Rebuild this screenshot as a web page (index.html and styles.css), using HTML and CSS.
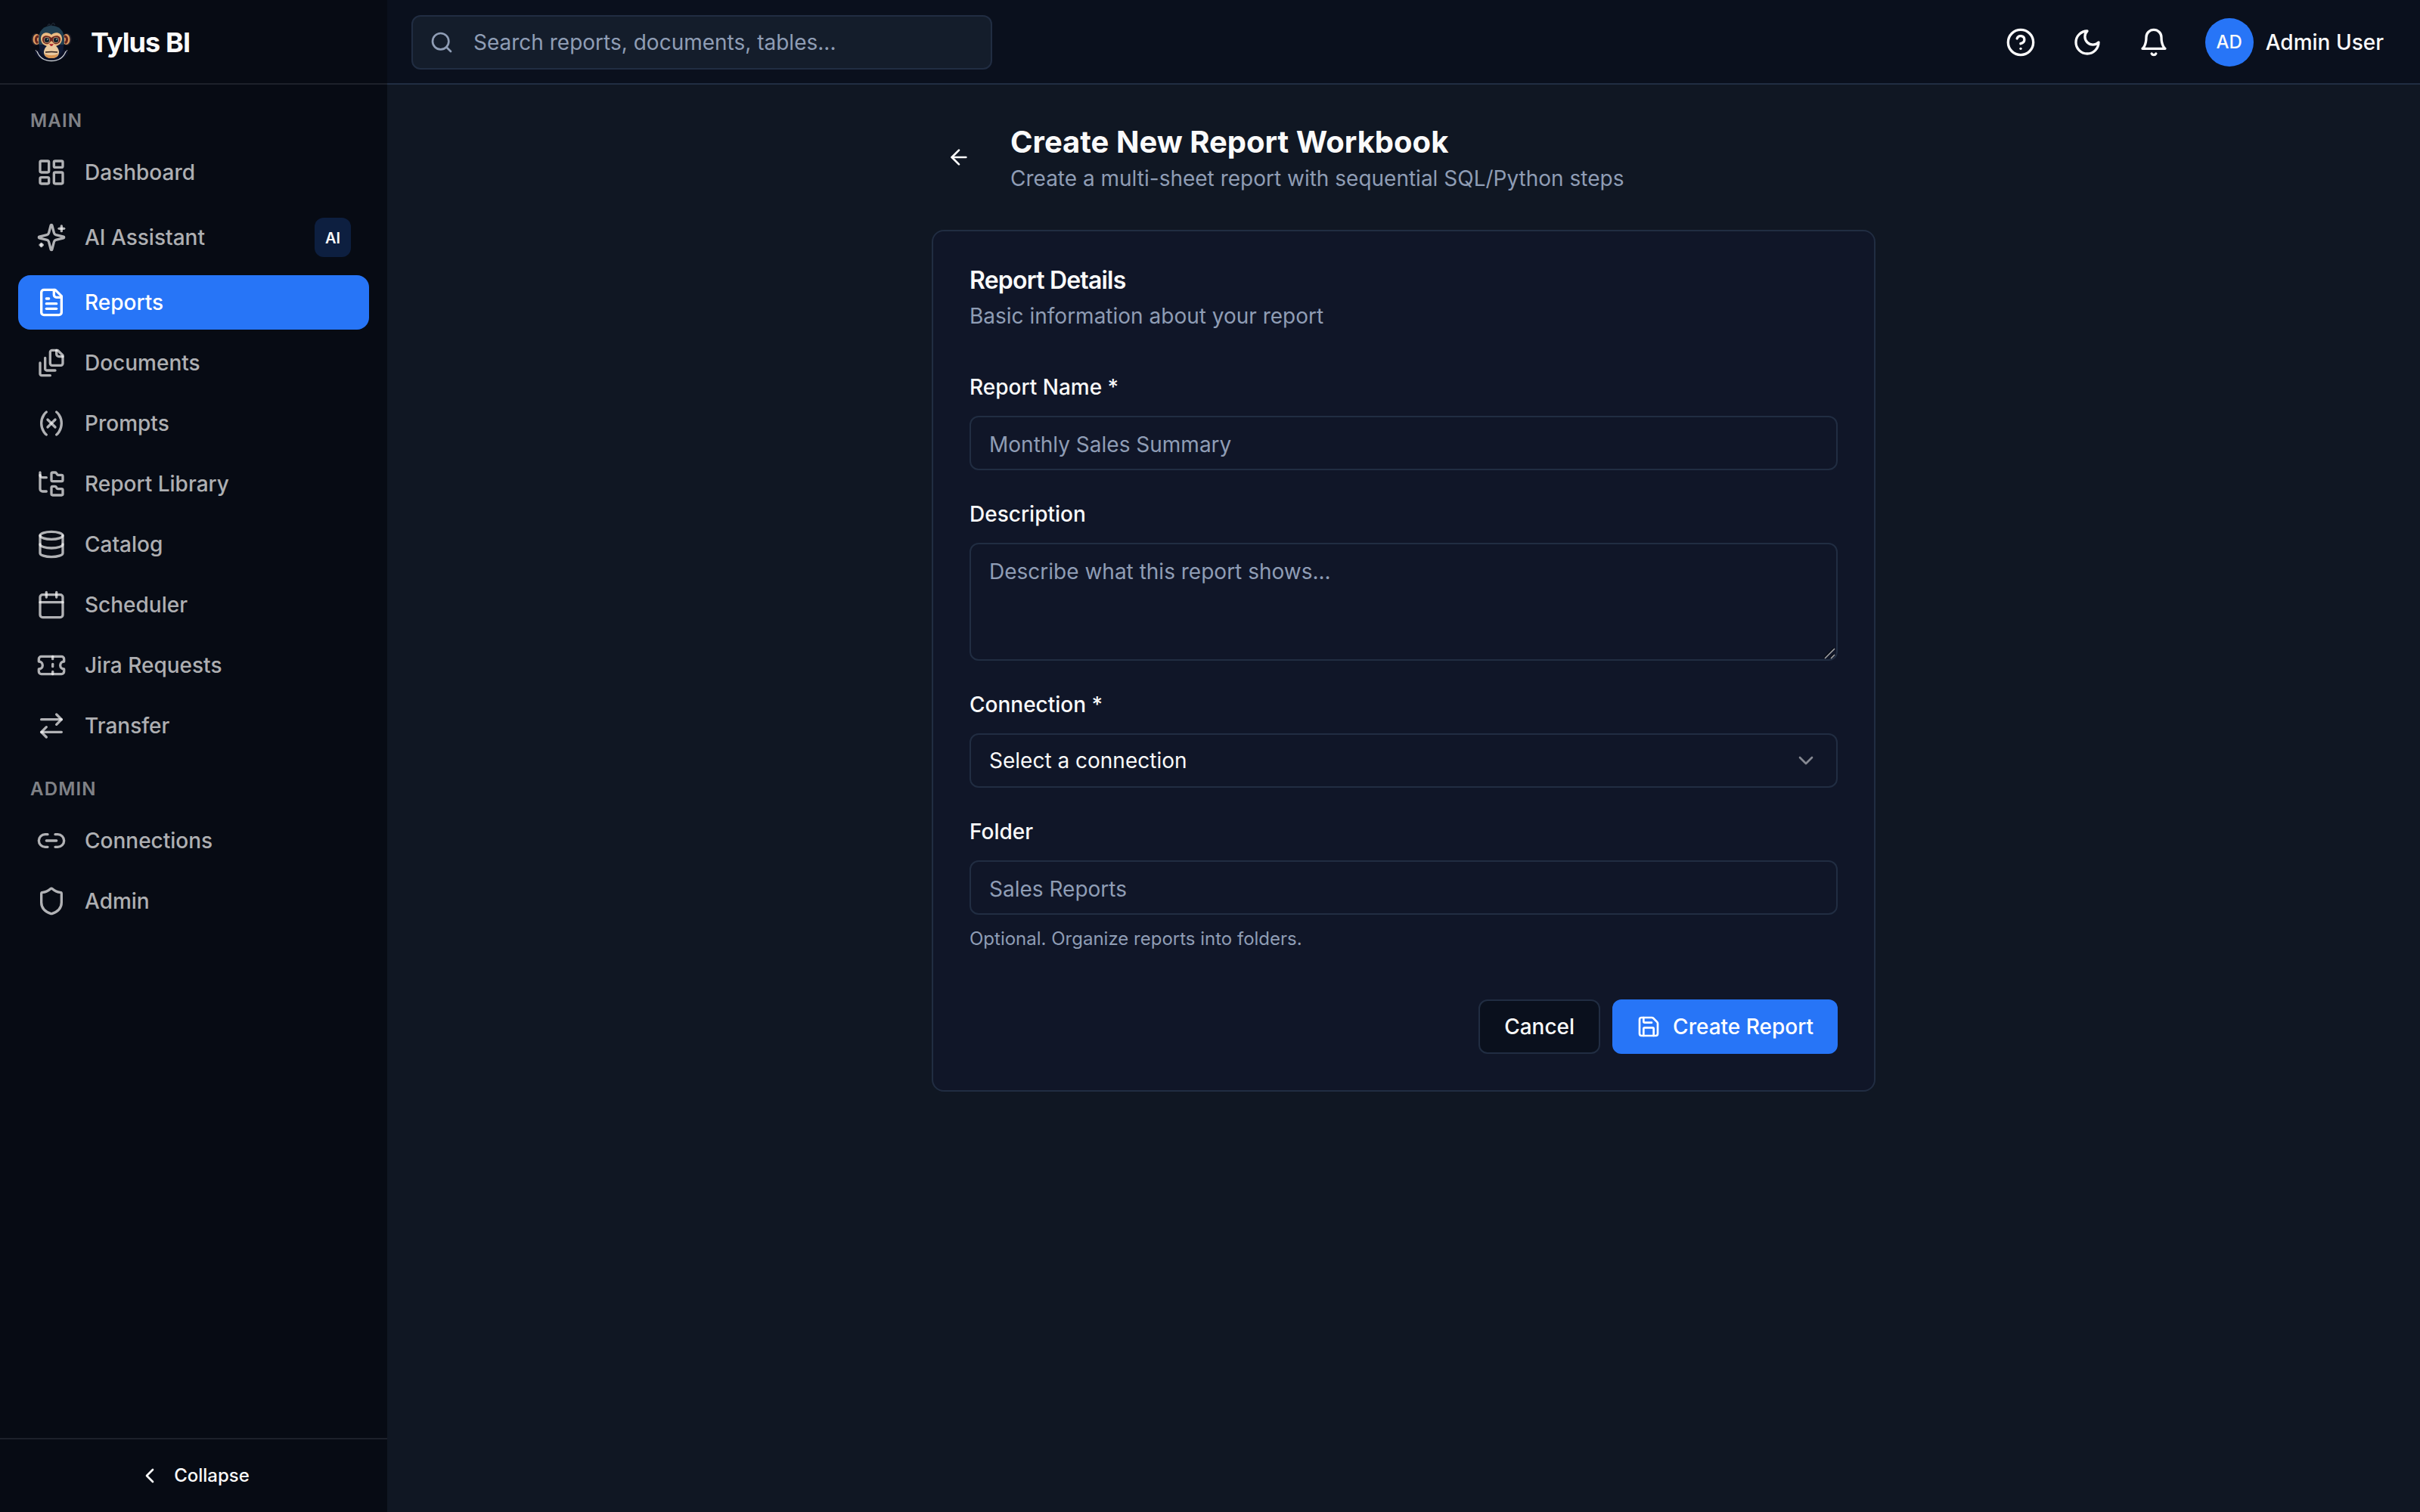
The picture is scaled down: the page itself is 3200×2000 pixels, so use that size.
FILE: index.html
```html
<!DOCTYPE html>
<html lang="en">
<head>
  <meta charset="UTF-8" />
  <meta name="viewport" content="width=device-width, initial-scale=1.0" />
  <title>Tylus BI - Create New Report Workbook</title>
  <link rel="stylesheet" href="styles.css">
</head>
<body>
  <aside class="sidebar">
    <div class="brand">
      <svg class="logo" viewBox="0 0 56 56">
        <path d="M8 38c-2 2-3 4-1 6 4 6 12 9 21 9s17-3 21-9c2-2 1-4-1-6z" fill="#0b1026"/>
        <path d="M9 40c3 8 10 12.500 19 12.500S44 48 47 40" fill="none" stroke="#c9cdd0" stroke-width="1.300"/>
        <path d="M7 38l2 3M49 38l-2 3" stroke="#aaa" stroke-width="1"/>
        <path d="M23 6c1-3 4-3 3 1M28 6c0-4 5-4 4-1" fill="none" stroke="#2b3846" stroke-width="1"/>
        <ellipse cx="7.500" cy="24" rx="6" ry="8" fill="#24222b"/>
        <ellipse cx="48.500" cy="24" rx="6" ry="8" fill="#24222b"/>
        <ellipse cx="8.500" cy="24" rx="5" ry="7" fill="#dc9a60"/>
        <ellipse cx="47.500" cy="24" rx="5" ry="7" fill="#dc9a60"/>
        <path d="M11 20c-4 0-5 6-1 9M45 20c4 0 5 6 1 9" fill="none" stroke="#64231d" stroke-width="3"/>
        <path d="M11 25C11 12 18 6 28 6s17 6 17 19c0 8-3 16-9 19H20c-6-3-9-11-9-19z" fill="#213e50"/>
        <path d="M12 31c-1 7 3 14 9 15h14c6-1 10-8 9-15z" fill="#101a35"/>
        <path d="M28 18c-5-5-14-3-14 5 0 6 4 9 8 10h12c4-1 8-4 8-10 0-8-9-10-14-5z" fill="#ebba82"/>
        <path d="M28 22c-4-4-12-4-12 2 0 5 4 7 8 6l4-4 4 4c4 1 8-1 8-6 0-6-8-6-12-2z" fill="#6c251e"/>
        <circle cx="22" cy="25" r="3.900" fill="#c9a07a"/>
        <circle cx="34" cy="25" r="3.900" fill="#c9a07a"/>
        <circle cx="22" cy="25" r="3.200" fill="#15232c"/>
        <circle cx="34" cy="25" r="3.200" fill="#15232c"/>
        <circle cx="23" cy="24" r=".8" fill="#d9e2e5"/>
        <circle cx="35" cy="24" r=".8" fill="#d9e2e5"/>
        <path d="M28 30c-5 0-10 6-10 11 0 6 5 8 10 8s10-2 10-8c0-5-5-11-10-11z" fill="#eac99f"/>
        <path d="M19 43c5 3 13 3 18 0-1 5-5 6-9 6s-8-1-9-6z" fill="#d89452"/>
        <path d="M25 30h6l-2 3h-2z" fill="#b33434"/>
        <path d="M20 41q8-1 16 0" fill="none" stroke="#2c1c1a" stroke-width="1.300"/>
      </svg>
      <span>Tylus BI</span>
    </div>

    <nav class="nav">
      <h3 class="nav-label">Main</h3>
      <a class="nav-item" href="#dashboard">
        <svg class="icon" viewBox="0 0 24 24"><rect width="7" height="9" x="3" y="3" rx="1"/><rect width="7" height="5" x="14" y="3" rx="1"/><rect width="7" height="9" x="14" y="12" rx="1"/><rect width="7" height="5" x="3" y="16" rx="1"/></svg>
        <span>Dashboard</span>
      </a>
      <a class="nav-item" href="#assistant">
        <svg class="icon" viewBox="0 0 24 24"><path d="M9.937 15.500A2 2 0 0 0 8.500 14.063l-6.135-1.582a.5.5 0 0 1 0-.962L8.500 9.936A2 2 0 0 0 9.937 8.500l1.582-6.135a.5.5 0 0 1 .963 0L14.063 8.500A2 2 0 0 0 15.500 9.937l6.135 1.581a.5.5 0 0 1 0 .964L15.500 14.063a2 2 0 0 0-1.437 1.437l-1.582 6.135a.5.5 0 0 1-.963 0z"/><path d="M20 3v4"/><path d="M22 5h-4"/><path d="M4 17v2"/><path d="M5 18H3"/></svg>
        <span>AI Assistant</span>
        <span class="badge">AI</span>
      </a>
      <a class="nav-item active" href="#reports">
        <svg class="icon" viewBox="0 0 24 24"><path d="M15 2H6a2 2 0 0 0-2 2v16a2 2 0 0 0 2 2h12a2 2 0 0 0 2-2V7Z"/><path d="M14 2v4a2 2 0 0 0 2 2h4"/><path d="M10 9H8"/><path d="M16 13H8"/><path d="M16 17H8"/></svg>
        <span>Reports</span>
      </a>
      <a class="nav-item" href="#documents">
        <svg class="icon" viewBox="0 0 24 24"><path d="M21 7h-3a2 2 0 0 1-2-2V2"/><path d="M21 6v6.500c0 .8-.7 1.500-1.500 1.500h-7c-.8 0-1.500-.7-1.500-1.500v-9c0-.8.7-1.500 1.500-1.500H17Z"/><path d="M7 8v8.800c0 .3.2.6.4.8.2.2.5.4.8.4H15"/><path d="M3 12v8.800c0 .3.2.6.4.8.2.2.5.4.8.4H11"/></svg>
        <span>Documents</span>
      </a>
      <a class="nav-item" href="#prompts">
        <svg class="icon" viewBox="0 0 24 24"><path d="M8 21s-4-3-4-9 4-9 4-9"/><path d="M16 3s4 3 4 9-4 9-4 9"/><path d="M15 9l-6 6"/><path d="M9 9l6 6"/></svg>
        <span>Prompts</span>
      </a>
      <a class="nav-item" href="#library">
        <svg class="icon" viewBox="0 0 24 24"><path d="M20 10a1 1 0 0 0 1-1V6a1 1 0 0 0-1-1h-2.500a1 1 0 0 1-.8-.4l-.9-1.200A1 1 0 0 0 15 3h-2a1 1 0 0 0-1 1v5a1 1 0 0 0 1 1Z"/><path d="M20 21a1 1 0 0 0 1-1v-3a1 1 0 0 0-1-1h-2.900a1 1 0 0 1-.88-.55l-.42-.85a1 1 0 0 0-.92-.6H13a1 1 0 0 0-1 1v5a1 1 0 0 0 1 1Z"/><path d="M3 5a2 2 0 0 0 2 2h3"/><path d="M3 3v13a2 2 0 0 0 2 2h3"/></svg>
        <span>Report Library</span>
      </a>
      <a class="nav-item" href="#catalog">
        <svg class="icon" viewBox="0 0 24 24"><ellipse cx="12" cy="5" rx="9" ry="3"/><path d="M3 5V19A9 3 0 0 0 21 19V5"/><path d="M3 12A9 3 0 0 0 21 12"/></svg>
        <span>Catalog</span>
      </a>
      <a class="nav-item" href="#scheduler">
        <svg class="icon" viewBox="0 0 24 24"><path d="M8 2v4"/><path d="M16 2v4"/><rect width="18" height="18" x="3" y="4" rx="2"/><path d="M3 10h18"/></svg>
        <span>Scheduler</span>
      </a>
      <a class="nav-item" href="#jira">
        <svg class="icon" viewBox="0 0 24 24"><path d="M2 9a3 3 0 0 1 0 6v2a2 2 0 0 0 2 2h16a2 2 0 0 0 2-2v-2a3 3 0 0 1 0-6V7a2 2 0 0 0-2-2H4a2 2 0 0 0-2 2Z"/><path d="M13 5v2"/><path d="M13 17v2"/><path d="M13 11v2"/></svg>
        <span>Jira Requests</span>
      </a>
      <a class="nav-item" href="#transfer">
        <svg class="icon" viewBox="0 0 24 24"><path d="m16 3 4 4-4 4"/><path d="M20 7H4"/><path d="m8 21-4-4 4-4"/><path d="M4 17h16"/></svg>
        <span>Transfer</span>
      </a>

      <h3 class="nav-label second">Admin</h3>
      <a class="nav-item" href="#connections">
        <svg class="icon" viewBox="0 0 24 24"><path d="M9 17H7A5 5 0 0 1 7 7h2"/><path d="M15 7h2a5 5 0 1 1 0 10h-2"/><path d="M8 12h8"/></svg>
        <span>Connections</span>
      </a>
      <a class="nav-item" href="#admin">
        <svg class="icon" viewBox="0 0 24 24"><path d="M20 13c0 5-3.500 7.500-7.660 8.950a1 1 0 0 1-.67-.01C7.500 20.500 4 18 4 13V6a1 1 0 0 1 1-1c2 0 4.500-1.200 6.240-2.720a1.170 1.170 0 0 1 1.520 0C14.510 3.810 17 5 19 5a1 1 0 0 1 1 1z"/></svg>
        <span>Admin</span>
      </a>
    </nav>

    <button class="collapse">
      <svg class="icon small" viewBox="0 0 24 24"><path d="m15 18-6-6 6-6"/></svg>
      Collapse
    </button>
  </aside>

  <div class="page">
    <header class="topbar">
      <label class="search">
        <svg class="icon small" viewBox="0 0 24 24"><circle cx="11" cy="11" r="8"/><path d="m21 21-4.300-4.300"/></svg>
        <input type="text" placeholder="Search reports, documents, tables...">
      </label>
      <div class="actions">
        <svg class="icon" viewBox="0 0 24 24"><circle cx="12" cy="12" r="10"/><path d="M9.090 9a3 3 0 0 1 5.830 1c0 2-3 3-3 3"/><path d="M12 17h.01"/></svg>
        <svg class="icon" viewBox="0 0 24 24"><path d="M12 3a6 6 0 0 0 9 9 9 9 0 1 1-9-9Z"/></svg>
        <svg class="icon" viewBox="0 0 24 24"><path d="M6 8a6 6 0 0 1 12 0c0 7 3 9 3 9H3s3-2 3-9"/><path d="M10.300 21a1.940 1.940 0 0 0 3.400 0"/></svg>
        <div class="user">
          <span class="avatar">AD</span>
          <span>Admin User</span>
        </div>
      </div>
    </header>

    <main class="content">
      <div class="page-head">
        <button class="back" aria-label="Back">
          <svg class="icon small" viewBox="0 0 24 24"><path d="m12 19-7-7 7-7"/><path d="M19 12H5"/></svg>
        </button>
        <div>
          <h1>Create New Report Workbook</h1>
          <p>Create a multi-sheet report with sequential SQL/Python steps</p>
        </div>
      </div>

      <form class="card">
        <div class="card-head">
          <h2>Report Details</h2>
          <p>Basic information about your report</p>
        </div>

        <div class="field">
          <label for="name">Report Name *</label>
          <input class="control" id="name" type="text" placeholder="Monthly Sales Summary">
        </div>
        <div class="field">
          <label for="desc">Description</label>
          <div class="textarea-wrap">
            <textarea class="control" id="desc" placeholder="Describe what this report shows..."></textarea>
            <svg class="grip" viewBox="0 0 16 16"><path class="grip-dark" d="M1 14L14 1M9 14l5-5"/><path d="M2 15L15 2M10 15l5-5"/></svg>
          </div>
        </div>
        <div class="field">
          <label>Connection *</label>
          <button class="control select" type="button">
            <span>Select a connection</span>
            <svg class="icon small" viewBox="0 0 24 24"><path d="m6 9 6 6 6-6"/></svg>
          </button>
        </div>
        <div class="field">
          <label for="folder">Folder</label>
          <input class="control" id="folder" type="text" placeholder="Sales Reports">
          <p class="hint">Optional. Organize reports into folders.</p>
        </div>

        <div class="buttons">
          <button class="btn outline" type="button">Cancel</button>
          <button class="btn primary" type="button">
            <svg class="icon small" viewBox="0 0 24 24"><path d="M15.200 3a2 2 0 0 1 1.400.6l3.800 3.800a2 2 0 0 1 .6 1.400V19a2 2 0 0 1-2 2H5a2 2 0 0 1-2-2V5a2 2 0 0 1 2-2z"/><path d="M17 21v-7a1 1 0 0 0-1-1H8a1 1 0 0 0-1 1v7"/><path d="M7 3v4a1 1 0 0 0 1 1h7"/></svg>
            Create Report
          </button>
        </div>
      </form>
    </main>
  </div>
</body>
</html>
```

FILE: styles.css
```css
:root {
  --bg: #101723;
  --sidebar: #070b14;
  --topbar: #0a101d;
  --card: #101628;
  --border: #212d42;
  --text: #fafafa;
  --muted: #8f9db5;
  --primary: #2775f7;
}

* { box-sizing: border-box; margin: 0; padding: 0; }
body { display: flex; height: 100vh; background: var(--bg); color: var(--text); font-family: Inter, sans-serif; font-size: 28px; line-height: 40px; overflow: hidden; }
button, input, textarea { font: inherit; color: inherit; background: none; border: none; outline: none; }
a { color: inherit; text-decoration: none; }
.icon { width: 40px; height: 40px; flex-shrink: 0; fill: none; stroke: currentColor; stroke-width: 2; stroke-linecap: round; stroke-linejoin: round; }
.icon.small { width: 32px; height: 32px; }

/* Sidebar */
.sidebar { width: 512px; flex-shrink: 0; display: flex; flex-direction: column; background: var(--sidebar); }
.brand { height: 112px; display: flex; align-items: center; gap: 24px; padding: 2px 40px 0; border-bottom: 2px solid #1d212b; font-size: 36px; font-weight: 700; letter-spacing: -0.025em; }
.logo { width: 56px; height: 56px; }
.nav { flex: 1; display: flex; flex-direction: column; gap: 8px; padding: 24px 24px 0; }
.nav-label { height: 48px; line-height: 48px; padding-left: 16px; font-size: 24px; font-weight: 600; letter-spacing: 0.05em; text-transform: uppercase; color: rgba(250, 250, 250, 0.5); }
.nav-label.second { margin-top: 16px; }
.nav-item { display: flex; align-items: center; gap: 24px; padding: 16px 24px; border-radius: 16px; font-weight: 500; color: rgba(250, 250, 250, 0.7); }
.nav-item.active { background: var(--primary); color: #fff; }
.badge { margin-left: auto; width: 48px; height: 52px; line-height: 54px; text-align: center; border-radius: 12px; background: #0d1f40; color: var(--text); font-size: 20px; font-weight: 600; }
.collapse { height: 98px; display: flex; align-items: center; justify-content: center; gap: 16px; border-top: 2px solid #1d212b; font-size: 24px; font-weight: 500; }

/* Top bar */
.page { flex: 1; display: flex; flex-direction: column; }
.topbar { height: 112px; display: flex; align-items: center; justify-content: space-between; padding: 2px 48px 0 32px; background: var(--topbar); border-bottom: 2px solid var(--border); }
.search { width: 768px; height: 72px; display: flex; align-items: center; gap: 26px; padding: 0 22px; background: #141d2b; border: 2px solid var(--border); border-radius: 12px; color: var(--muted); }
.search input { flex: 1; }
.actions { display: flex; align-items: center; gap: 48px; }
.user { display: flex; align-items: center; gap: 16px; font-weight: 500; }
.avatar { width: 64px; height: 64px; line-height: 64px; text-align: center; border-radius: 50%; background: var(--primary); font-size: 24px; }

/* Content */
.content { width: 1248px; margin: 0 auto; padding-top: 48px; }
.page-head { display: flex; align-items: center; gap: 32px; margin-bottom: 48px; }
.back { width: 72px; height: 72px; display: flex; align-items: center; justify-content: center; }
h1 { font-size: 40px; line-height: 56px; font-weight: 700; }
.page-head p, .card-head p { color: var(--muted); }
.card { padding: 48px; background: var(--card); border: 2px solid var(--border); border-radius: 16px; }
.card-head { margin-bottom: 58px; }
h2 { font-size: 32px; line-height: 34px; font-weight: 600; letter-spacing: -0.025em; margin-bottom: 10px; }
.field { margin-bottom: 42px; }
.field label { display: block; height: 54px; line-height: 32px; font-weight: 500; }
.control { display: block; width: 100%; height: 72px; padding: 4px 24px 0; border: 2px solid var(--border); border-radius: 12px; }
::placeholder { color: var(--muted); opacity: 1; }
textarea.control { height: 156px; padding-top: 16px; resize: none; }
.textarea-wrap { position: relative; }
.grip { position: absolute; right: 3px; bottom: 2px; width: 16px; height: 16px; fill: none; stroke: #a5a5a8; stroke-width: 1.500; }
.grip-dark { stroke: #080c14; }
.select { display: flex; align-items: center; justify-content: space-between; padding-top: 0; }
.select .icon { opacity: 0.5; }
.hint { margin-top: 16px; font-size: 24px; line-height: 32px; color: var(--muted); }
.buttons { display: flex; justify-content: flex-end; gap: 16px; margin-top: 64px; }
.btn { height: 72px; display: flex; align-items: center; gap: 16px; padding: 0 32px; border-radius: 12px; font-weight: 500; }
.outline { background: var(--topbar); border: 2px solid var(--border); }
.primary { background: var(--primary); color: #fff; }
```
